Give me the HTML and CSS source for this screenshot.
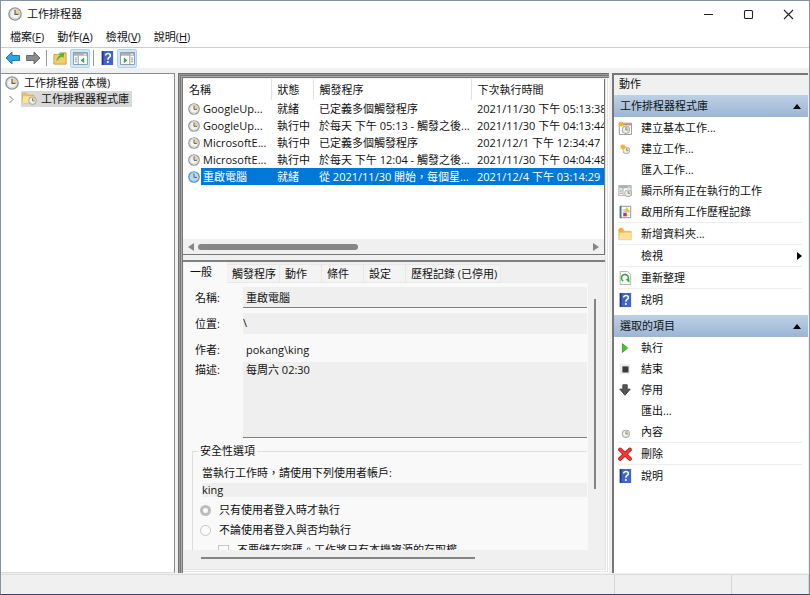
FILE: index.html
```html
<!DOCTYPE html>
<html lang="zh-Hant">
<head>
  <meta charset="UTF-8">
  <meta name="viewport" content="width=device-width, initial-scale=1.0">
  <title>工作排程器</title>
  <link rel="stylesheet" href="styles.css">
</head>
<body>
  <!-- shared icons -->
  <svg class="defs" width="0" height="0">
    <symbol id="clock" viewBox="0 0 16 16">
      <circle cx="8" cy="8" r="7" fill="#f4f4ef" stroke="#93979a" stroke-width="1.6"/>
      <path d="M8 8V2.5A5.5 5.5 0 0 1 13.5 8Z" fill="#f2d58c"/>
      <circle cx="8" cy="8" r="5.3" fill="none" stroke="#c9cdd0" stroke-width=".8"/>
      <path d="M8 3.5V8.5H12" fill="none" stroke="#56606a" stroke-width="1.3"/>
    </symbol>
    <symbol id="clock-selected" viewBox="0 0 16 16">
      <circle cx="8" cy="8" r="7" fill="#b5d6ee" stroke="#5a8db5" stroke-width="1.6"/>
      <path d="M8 8V2.5A5.5 5.5 0 0 1 13.5 8Z" fill="#d3d5b4"/>
      <path d="M8 3.5V8.5H12" fill="none" stroke="#2f6592" stroke-width="1.3"/>
    </symbol>
    <symbol id="help" viewBox="0 0 16 16">
      <path d="M2 0H15V16H2Z" fill="#4064c8"/>
      <path d="M2 0H4V16H2Z" fill="#20388c"/>
      <path d="M6.3 5.2C6.3 2.2 11.8 2.2 11.8 5.3C11.8 7.5 9 7.3 9 10" fill="none" stroke="#fff" stroke-width="1.7"/>
      <circle cx="9" cy="12.6" r="1.2" fill="#fff"/>
    </symbol>
    <symbol id="folder" viewBox="0 0 16 16">
      <path d="M1 3H6L7.5 5H15V14.5H1Z" fill="#eec35c" stroke="#cfa044" stroke-width=".7"/>
      <path d="M2 6.5H15V14.5H1Z" fill="#fbe29b"/>
    </symbol>
    <symbol id="spark" viewBox="0 0 8 8">
      <path d="M4 0L5 1.600L7 1L6.400 3L8 4L6.400 5L7 7L5 6.400L4 8L3 6.400L1 7L1.600 5L0 4L1.600 3L1 1L3 1.600Z" fill="#f9b233"/>
    </symbol>
    <symbol id="panel" viewBox="0 0 16 14">
      <path d="M.5 .5H15.5V13.5H.5Z" fill="#fff" stroke="#8b9299"/>
      <path d="M1 1H15V4H1Z" fill="#a7afb8"/>
      <path d="M11.5 2.5H14" stroke="#fff"/>
      <path d="M5.5 4V13" stroke="#8b9299"/>
      <path d="M2 6.5H4M2 8.5H4M2 10.5H4" stroke="#7d858e"/>
    </symbol>
  </svg>

  <header class="titlebar">
    <svg class="icon14"><use href="#clock"/></svg>
    <h1>工作排程器</h1>
    <div class="window-buttons">
      <button type="button" aria-label="最小化"><svg width="11" height="11"><path d="M1 5.5H10" stroke="#222"/></svg></button>
      <button type="button" aria-label="最大化"><svg width="11" height="11"><rect x="1.5" y="1.5" width="8" height="8" rx="1" fill="none" stroke="#222" stroke-width="1.1"/></svg></button>
      <button type="button" aria-label="關閉"><svg width="11" height="11"><path d="M1 1L10 10M10 1L1 10" stroke="#222" stroke-width="1.1"/></svg></button>
    </div>
  </header>

  <nav class="menubar">
    <button type="button">檔案(<u>F</u>)</button>
    <button type="button">動作(<u>A</u>)</button>
    <button type="button">檢視(<u>V</u>)</button>
    <button type="button">說明(<u>H</u>)</button>
  </nav>

  <div class="toolbar">
    <button type="button" aria-label="上一頁"><svg width="16" height="14"><path d="M1 7L7 1V4.5H14.5V9.5H7V13Z" fill="#2fa4e7" stroke="#2479b4"/></svg></button>
    <button type="button" aria-label="下一頁"><svg width="16" height="14"><path d="M15 7L9 1V4.5H1.5V9.5H9V13Z" fill="#8b8b8b" stroke="#6d6d6d"/></svg></button>
    <span class="divider"></span>
    <button type="button" aria-label="向上"><svg width="14" height="14" viewBox="0 0 16 16"><path d="M1 4H6L8 2H15V15H1Z" fill="#f0cc6c" stroke="#c79f48"/><path d="M4 12C4 8 6 6 8 5L6.500 3.500L13 2L12 8L10.500 6.500C8 7 6 9 4 12Z" fill="#53b52c"/></svg></button>
    <button type="button" class="on" aria-label="主控台樹狀目錄"><svg width="15" height="13" viewBox="0 0 16 14"><use href="#panel"/><path d="M12 6V12L8 9Z" fill="#3ea83a"/></svg></button>
    <span class="divider"></span>
    <button type="button" aria-label="說明"><svg class="icon14"><use href="#help"/></svg></button>
    <button type="button" class="on" aria-label="動作窗格"><svg width="15" height="13" viewBox="0 0 16 14"><path d="M.5 .5H15.5V13.5H.5Z" fill="#fff" stroke="#8b9299"/><path d="M1 1H15V4H1Z" fill="#a7afb8"/><path d="M11.500 2.500H14" stroke="#fff"/><path d="M10.500 4V13" stroke="#8b9299"/><path d="M12 6.500H14M12 8.500H14M12 10.500H14" stroke="#7d858e"/><path d="M4 6V12L8 9Z" fill="#3ea83a"/></svg></button>
  </div>

  <main>
    <ul class="tree">
      <li><svg class="icon14"><use href="#clock"/></svg><span>工作排程器 (本機)</span></li>
      <li>
        <svg class="chevron" width="7" height="9"><path d="M1.500 1L5 4.500L1.500 8" fill="none" stroke="#777"/></svg>
        <span class="selected">
          <svg width="16" height="14" viewBox="0 0 18 16"><use href="#folder" width="16" height="15"/><use href="#clock" x="8" y="6" width="10" height="10"/></svg>
          工作排程器程式庫
        </span>
      </li>
    </ul>

    <section class="center">
      <div class="list">
        <table>
          <colgroup><col class="c-name"><col class="c-state"><col class="c-trigger"><col></colgroup>
          <thead>
            <tr><th>名稱</th><th>狀態</th><th>觸發程序</th><th>下次執行時間</th></tr>
          </thead>
          <tbody>
            <tr><td><div class="task"><svg class="icon12"><use href="#clock"/></svg><span>GoogleUp...</span></div></td><td>就緒</td><td>已定義多個觸發程序</td><td>2021/11/30 下午 05:13:38</td></tr>
            <tr><td><div class="task"><svg class="icon12"><use href="#clock"/></svg><span>GoogleUp...</span></div></td><td>執行中</td><td>於每天 下午 05:13 - 觸發之後...</td><td>2021/11/30 下午 04:13:44</td></tr>
            <tr><td><div class="task"><svg class="icon12"><use href="#clock"/></svg><span>MicrosoftE...</span></div></td><td>執行中</td><td>已定義多個觸發程序</td><td>2021/12/1 下午 12:34:47</td></tr>
            <tr><td><div class="task"><svg class="icon12"><use href="#clock"/></svg><span>MicrosoftE...</span></div></td><td>執行中</td><td>於每天 下午 12:04 - 觸發之後...</td><td>2021/11/30 下午 04:04:48</td></tr>
            <tr class="current"><td><div class="task"><svg class="icon12"><use href="#clock-selected"/></svg><span>重啟電腦</span></div></td><td>就緒</td><td>從 2021/11/30 開始，每個星...</td><td>2021/12/4 下午 03:14:29</td></tr>
          </tbody>
        </table>
        <div class="hscroll">
          <svg width="6" height="8"><path d="M6 0V8L0 4Z" fill="#858585"/></svg>
          <div class="track"><div class="thumb"></div></div>
          <svg width="6" height="8"><path d="M0 0V8L6 4Z" fill="#858585"/></svg>
        </div>
      </div>

      <div class="detail">
        <div class="tabs">
          <button type="button" class="active">一般</button>
          <button type="button">觸發程序</button>
          <button type="button">動作</button>
          <button type="button">條件</button>
          <button type="button">設定</button>
          <button type="button">歷程記錄 (已停用)</button>
        </div>
        <div class="pane">
          <form class="general">
            <div class="field">
              <label for="name">名稱:</label>
              <input type="text" id="name" class="lined" value="重啟電腦" readonly>
            </div>
            <div class="field">
              <label for="location">位置:</label>
              <input type="text" id="location" class="location" value="\" readonly>
            </div>
            <div class="field author">
              <label for="author">作者:</label>
              <input type="text" id="author" value="pokang\king" readonly>
            </div>
            <div class="field top">
              <label for="desc">描述:</label>
              <textarea id="desc" class="lined" readonly>每周六 02:30</textarea>
            </div>
            <fieldset>
              <legend>安全性選項</legend>
              <label for="account">當執行工作時，請使用下列使用者帳戶:</label>
              <input type="text" id="account" value="king" readonly>
              <label class="choice"><input type="radio" name="logon" checked>只有使用者登入時才執行</label>
              <label class="choice"><input type="radio" name="logon">不論使用者登入與否均執行</label>
              <label class="choice sub"><input type="checkbox">不要儲存密碼。工作將只有本機資源的存取權</label>
            </fieldset>
          </form>
          <div class="vbar"></div>
        </div>
        <div class="hbar"></div>
      </div>
    </section>

    <aside class="actions">
      <h2>動作</h2>
      <h3>工作排程器程式庫 <svg width="8" height="5"><path d="M0 5H8L4 0Z"/></svg></h3>
      <ul>
        <li><button type="button"><svg class="icon14" viewBox="0 0 16 16"><path d="M1.500 2.500H15.500V15.500H1.500Z" fill="#fff" stroke="#8d8d8d"/><path d="M2 3H15V5H2Z" fill="#c58a78"/><use href="#clock" x="4" y="5" width="10" height="10"/><use href="#spark" width="7" height="7"/></svg>建立基本工作...</button></li>
        <li><button type="button"><svg class="icon14" viewBox="0 0 16 16"><use href="#clock" x="5" y="5" width="9" height="9"/><use href="#spark" x="2" y="2" width="7" height="7"/></svg>建立工作...</button></li>
        <li><button type="button"><span class="icon14"></span>匯入工作...</button></li>
        <li><button type="button"><svg class="icon14" viewBox="0 0 16 16"><use href="#panel" y="1" width="16" height="13"/><use href="#clock" x="7" y="6" width="9" height="9"/></svg>顯示所有正在執行的工作</button></li>
        <li><button type="button"><svg class="icon14" viewBox="0 0 16 16"><path d="M2.500 1.500H14.500V14.500H2.500Z" fill="#fff" stroke="#7889a0"/><path d="M2 1H4V15H2Z" fill="#546e98"/><path d="M5 5.500H10M5 8H13M9 11.500H13" stroke="#a8b7cc"/><path d="M10 2L14 8H7Z" fill="#f5c31e"/><rect x="6" y="9" width="4" height="4" fill="#cf3b35"/></svg>啟用所有工作歷程記錄</button></li>
        <li class="sep"><button type="button"><svg class="icon14" viewBox="0 0 16 16"><use href="#folder" width="16" height="16"/><use href="#spark" width="7" height="7"/></svg>新增資料夾...</button></li>
        <li class="sep"><button type="button"><span class="icon14"></span>檢視<svg class="more" width="5" height="8"><path d="M0 0V8L5 4Z"/></svg></button></li>
        <li class="sep"><button type="button"><svg class="icon14" viewBox="0 0 16 16"><path d="M2.500 .5H11L14.500 4V15.500H2.500Z" fill="#f8faf6" stroke="#a5aaa2"/><path d="M6 11.500A4 4 0 1 1 11 10.500" fill="none" stroke="#35a63c" stroke-width="1.800"/><path d="M8.500 9.500H13V13.500Z" fill="#35a63c"/></svg>重新整理</button></li>
        <li class="sep"><button type="button"><svg class="icon14"><use href="#help"/></svg>說明</button></li>
      </ul>
      <h3>選取的項目 <svg width="8" height="5"><path d="M0 5H8L4 0Z"/></svg></h3>
      <ul>
        <li><button type="button"><svg class="icon14" viewBox="0 0 16 16"><path d="M5 3V13L11 8Z" fill="#45c52d" stroke="#319e24"/></svg>執行</button></li>
        <li><button type="button"><svg class="icon14" viewBox="0 0 16 16"><path d="M2 2H14V14H2Z" fill="#eee"/><path d="M5 5H12V12H5Z" fill="#3b3b3b"/></svg>結束</button></li>
        <li><button type="button"><svg class="icon14" viewBox="0 0 16 16"><path d="M5.500 2H10.500V7H14L8 14L2 7H5.500Z" fill="#555" stroke="#3d3d3d"/></svg>停用</button></li>
        <li><button type="button"><span class="icon14"></span>匯出...</button></li>
        <li><button type="button"><svg class="icon14" viewBox="0 0 16 16"><use href="#clock" x="4" y="5" width="10" height="10"/></svg>內容</button></li>
        <li class="sep"><button type="button"><svg class="icon14" viewBox="0 0 16 16"><path d="M2.500 3L13.500 13.500M13.500 3L2.500 13.500" stroke="#b71717" stroke-width="4.600" stroke-linecap="round"/><path d="M2.500 3L13.500 13.500M13.500 3L2.500 13.500" stroke="#ee3b33" stroke-width="3" stroke-linecap="round"/></svg>刪除</button></li>
        <li class="sep"><button type="button"><svg class="icon14"><use href="#help"/></svg>說明</button></li>
      </ul>
    </aside>
  </main>

  <footer class="statusbar"><span></span><span></span><span></span></footer>
</body>
</html>
```
FILE: styles.css
```css
* {
  box-sizing: border-box;
}

body {
  display: flex;
  flex-direction: column;
  height: 100vh;
  margin: 0;
  overflow: hidden;
  background-color: #f0f0f0;
  border: 1px solid #8494a3;
  border-bottom-color: #34457c;
  color: #111;
  font-family: "Open Sans", "Noto Sans CJK TC", sans-serif;
  font-size: 11px;
  line-height: 16px;
}

button,
input,
textarea {
  margin: 0;
  padding: 0;
  border: none;
  border-radius: 0;
  background: none;
  color: inherit;
  font: inherit;
}

ul {
  margin: 0;
  padding: 0;
  list-style: none;
}

h1, h2, h3 {
  margin: 0;
  font-size: 11px;
  font-weight: normal;
}

svg {
  display: block;
  flex: none;
}

.defs {
  position: absolute;
}

.icon14 {
  flex: none;
  width: 14px;
  height: 14px;
}

.icon12 {
  width: 12px;
  height: 12px;
}

/* title, menu, toolbar */
.titlebar {
  display: flex;
  align-items: center;
  gap: 5px;
  height: 26px;
  padding-left: 7px;
  background-color: #fff;
}

.window-buttons {
  display: flex;
  margin-left: auto;
  padding-right: 1px;
}

.window-buttons button {
  display: flex;
  align-items: center;
  justify-content: center;
  width: 40px;
  height: 24px;
}

.menubar {
  display: flex;
  gap: 13px;
  height: 21px;
  padding-left: 9px;
  background-color: #fff;
  border-bottom: 1px solid #ccc;
}

.toolbar {
  display: flex;
  align-items: center;
  height: 20px;
  padding-left: 2px;
  background-color: #fff;
}

.toolbar button {
  display: flex;
  align-items: center;
  justify-content: center;
  width: 20px;
  height: 19px;
}

.toolbar button.on {
  background-color: #cce8ff;
  border: 1px solid #a6d5fa;
  border-radius: 2px;
}

.toolbar .divider {
  width: 1px;
  height: 16px;
  margin: 0 3px;
  background-color: #999;
}

/* three panes */
main {
  display: grid;
  grid-template-columns: 174px minmax(0, 1fr) 196px;
  grid-template-rows: minmax(0, 1fr);
  gap: 3px;
  flex: 1;
  min-height: 0;
  padding: 5px 1px 1px 0;
}

.tree {
  padding-top: 1px;
  background-color: #fff;
  border: 1px solid #8c8c8c;
  border-left: none;
  border-bottom-color: #ddd;
}

.tree li {
  display: flex;
  align-items: center;
  gap: 5px;
  padding-left: 4px;
}

.chevron {
  margin: 0 3px;
}

.tree .selected {
  display: flex;
  gap: 4px;
  margin-left: -2px;
  padding-right: 3px;
  background-color: #d9d9d9;
}

.center {
  display: flex;
  flex-direction: column;
  gap: 5px;
  padding: 6px 4px 6px 5px;
  box-shadow:
    inset 1px 1px #707070,
    inset 2px 2px #999,
    inset 3px 3px #777,
    inset 4px 4px #aaa,
    inset 5px 5px #777,
    inset -1px -1px #fff,
    inset -2px -2px #e3e3e3,
    inset -3px -3px #fff,
    inset -4px -4px #e3e3e3;
}

/* task list */
.list {
  display: flex;
  flex-direction: column;
  flex: none;
  height: 176px;
  overflow: hidden;
  background-color: #fff;
  border-right: 1px solid #777;
  border-bottom: 1px solid #777;
}

table {
  width: 100%;
  table-layout: fixed;
  border-collapse: collapse;
}

.c-name { width: 88px; }
.c-state { width: 42px; }
.c-trigger { width: 158px; }

th,
td {
  padding: 0 0 0 6px;
  overflow: hidden;
  font-weight: normal;
  text-align: left;
  white-space: nowrap;
}

th {
  height: 21px;
  border-right: 1px solid #e3e3e3;
}

th:last-child {
  border-right: none;
}

td {
  height: 17px;
  line-height: 17px;
}

td:first-child {
  padding-left: 5px;
}

.task {
  display: flex;
  align-items: center;
  gap: 1px;
}

.task span {
  flex: 1;
  padding-left: 2px;
}

.current td {
  background-color: #0078d7;
  color: #fff;
}

.current td:first-child {
  background-color: #fff;
}

.current .task span {
  background-color: #0078d7;
}

.hscroll {
  display: flex;
  align-items: center;
  gap: 4px;
  height: 15px;
  margin-top: auto;
  padding: 0 5px;
  background-color: #f0f0f0;
}

.track {
  flex: 1;
}

.thumb {
  width: 41%;
  height: 6px;
  background-color: #868686;
  border-radius: 3px;
}

/* task details */
.detail {
  display: flex;
  flex-direction: column;
  flex: 1;
  min-height: 0;
  padding-left: 1px;
  border-top: 2px solid #808080;
}

.tabs {
  display: flex;
  height: 21px;
}

.tabs button {
  height: 19px;
  margin-top: 2px;
  padding: 0 14px 0 5px;
  background-color: #f3f3f3;
  border: 1px solid #e8e8e8;
  border-left: none;
  white-space: nowrap;
}

.tabs button:nth-child(2),
.tabs button:last-child {
  padding-right: 3px;
}

.tabs button.active {
  height: 21px;
  margin-top: 0;
  padding: 0 14px 2px 6px;
  background-color: #f9f9f9;
  border-color: #f9f9f9;
}

.pane {
  display: flex;
  flex: 1;
  min-height: 0;
}

.general {
  flex: 1;
  min-width: 0;
  padding: 4px 1px 0 8px;
  overflow: hidden;
  background-color: #f9f9f9;
}

.field {
  display: flex;
  align-items: center;
  margin-bottom: 5px;
  padding-left: 3px;
}

.field label {
  flex: none;
  width: 48px;
}

.field input,
.field textarea {
  flex: 1;
  min-width: 0;
  height: 21px;
  padding: 0 3px;
  background-color: #efefef;
}

.field .location {
  padding: 0 0 3px 0;
}

.field.author {
  margin-bottom: 2px;
}

.field.author input {
  background-color: transparent;
}

.field .lined {
  border-bottom: 1px solid #808080;
}

.field textarea {
  height: 76px;
  resize: none;
}

.field.top {
  align-items: flex-start;
}

fieldset {
  min-width: 0;
  margin: 0;
  padding: 6px 0 0 9px;
  border: 1px solid #ddd;
  border-right: none;
}

legend {
  padding: 0 2px;
  margin-left: -4px;
}

fieldset > label {
  display: block;
  white-space: nowrap;
}

fieldset > input {
  display: block;
  width: 100%;
  height: 14px;
  margin: 2px 0 3px;
  background-color: #efefef;
}

.choice {
  display: flex;
  align-items: center;
  gap: 8px;
  height: 20px;
}

.choice input {
  appearance: none;
  flex: none;
  width: 11px;
  height: 11px;
  margin-left: -2px;
  background-color: #fbfbfb;
  border: 1px solid #c6c6c6;
}

.choice input[type="radio"] {
  border-radius: 50%;
}

.choice input[type="radio"]:checked {
  border: 3px solid #bdbdbd;
}

.choice.sub {
  padding-left: 18px;
}

.vbar {
  flex: none;
  width: 2px;
  height: 190px;
  margin: 16px 9px 0 6px;
  background-color: #858585;
}

.hbar {
  width: 65%;
  height: 2px;
  margin: 7px 0 8px 17px;
  background-color: #858585;
}

/* actions */
.actions {
  overflow: hidden;
  background-color: #fff;
  border-top: 2px solid #777;
  border-left: 2px solid #777;
}

.actions h2 {
  height: 20px;
  padding: 1px 5px;
  background-color: #f0f0f0;
}

.actions h3 {
  display: flex;
  align-items: center;
  justify-content: space-between;
  height: 22px;
  padding: 0 7px 0 6px;
  background: linear-gradient(#bdd1e6, #9bb5d3);
}

.actions ul {
  margin-bottom: 5px;
}

.actions li {
  margin: 0 6px 0 4px;
}

.actions .sep {
  border-top: 1px solid #eee;
}

.actions li button {
  display: flex;
  align-items: center;
  gap: 9px;
  width: 100%;
  height: 21px;
  text-align: left;
}

.more {
  margin-left: auto;
}

/* status bar */
.statusbar {
  display: grid;
  grid-template-columns: 1fr 117px 77px;
  height: 20px;
  border-top: 1px solid #ddd;
}

.statusbar span {
  border-right: 1px solid #d5d5d5;
}
```
